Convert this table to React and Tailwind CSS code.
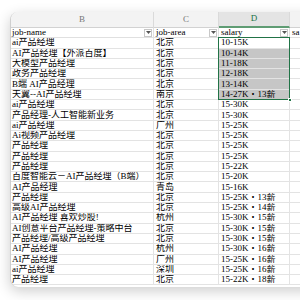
import React from 'react';

const rows = [
  ['ai产品经理', '北京', '10-15K'],
  ['AI产品经理【外派百度】', '北京', '10-14K'],
  ['大模型产品经理', '北京', '11-18K'],
  ['政务产品经理', '北京', '12-18K'],
  ['B端 AI产品经理', '北京', '13-14K'],
  ['天翼--AI产品经理', '南京', '14-27K・13薪'],
  ['ai产品经理', '北京', '15-30K'],
  ['产品经理-人工智能新业务', '北京', '15-30K'],
  ['ai产品经理', '广州', '15-25K'],
  ['Ai视频产品经理', '北京', '15-25K'],
  ['产品经理', '北京', '15-25K'],
  ['产品经理', '北京', '15-25K'],
  ['产品经理', '北京', '15-22K'],
  ['百度智能云－AI产品经理（B端）', '北京', '15-20K'],
  ['AI产品经理', '青岛', '15-16K'],
  ['产品经理', '北京', '15-25K・13薪'],
  ['高级AI产品经理', '北京', '15-25K・14薪'],
  ['AI产品经理 喜欢炒股!', '杭州', '15-30K・15薪'],
  ['AI创意平台产品经理-策略中台', '北京', '15-30K・15薪'],
  ['产品经理/高级产品经理', '北京', '15-30K・15薪'],
  ['AI产品经理', '杭州', '15-30K・16薪'],
  ['AI产品经理', '广州', '15-25K・16薪'],
  ['ai产品经理', '深圳', '15-25K・16薪'],
  ['产品经理', '北京', '15-22K・18薪'],
];

const font = { fontFamily: '"Liberation Serif", "Noto Sans CJK SC", serif' };

function FilterBtn() {
  return (
    <span className="ml-auto mr-[1px] flex h-[8px] w-[8px] shrink-0 items-center justify-center border border-[#c8c8c8] bg-white">
      <svg width="5" height="3" viewBox="0 0 5 3">
        <path d="M0 0h5L2.5 3z" fill="#555" />
      </svg>
    </span>
  );
}

export default function App() {
  return (
    <div className="h-[300px] w-[300px] overflow-hidden bg-white pl-[10px] pt-[12px]" style={font}>
      <div className="relative h-[275px] w-[320px] overflow-hidden rounded-l-[8px] border-l border-[#cfcfcf] bg-white shadow-[0_4px_14px_rgba(0,0,0,0.2)]">
        {/* column letters */}
        <div className="grid h-[16px] grid-cols-[143px_65px_71px_1fr] border-b border-[#d2d2d2] bg-[#f3f3f3] text-[9px] text-[#777]">
          <div className="flex items-center justify-center border-r border-[#dadada]">B</div>
          <div className="flex items-center justify-center border-r border-[#dadada]">C</div>
          <div className="flex items-center justify-center border-r border-[#dadada] border-b-2 border-b-[#5f9c73] bg-[#e4e4e4] text-[#217346]">D</div>
          <div />
        </div>

        {/* header row */}
        <div className="grid h-[10.3px] grid-cols-[143px_65px_71px_1fr] border-b border-[#e0e0e0] text-[9px] leading-[9px] text-[#000]">
          <div className="flex items-center overflow-hidden whitespace-nowrap border-r border-[#e0e0e0] pl-[1px]">job-name<FilterBtn /></div>
          <div className="flex items-center overflow-hidden whitespace-nowrap border-r border-[#e0e0e0] pl-[2px]">job-area<FilterBtn /></div>
          <div className="flex items-center overflow-hidden whitespace-nowrap border-r border-[#e0e0e0] pl-[2px]">salary<FilterBtn /></div>
          <div className="flex items-center overflow-hidden whitespace-nowrap pl-[2px]">sa</div>
        </div>

        {rows.map((r, i) => (
          <div key={i} className="grid h-[10.3px] grid-cols-[143px_65px_71px_1fr] border-b border-[#e3e3e3] text-[9px] leading-[9px] text-[#000]">
            <div className="flex items-center overflow-hidden whitespace-nowrap border-r border-[#e3e3e3] pl-[1px]">{r[0]}</div>
            <div className="flex items-center overflow-hidden whitespace-nowrap border-r border-[#e3e3e3] pl-[2px]">{r[1]}</div>
            <div className={`flex items-center overflow-hidden whitespace-nowrap border-r border-[#e3e3e3] pl-[2px] ${i > 0 && i < 6 ? 'bg-[#c6c6c6]' : ''}`}>{r[2]}</div>
            <div />
          </div>
        ))}

        {/* selection D2:D7 */}
        <div className="pointer-events-none absolute left-[207px] top-[25.3px] h-[62.8px] w-[72px] border-[1.5px] border-[#217346]" />
        <div className="absolute left-[276.5px] top-[85.5px] h-[4px] w-[4px] border border-white bg-[#217346]" />
        <div className="absolute left-[-1px] top-[10px] h-[76px] w-[1px] bg-[#8fbf9c]" />
      </div>
    </div>
  );
}
